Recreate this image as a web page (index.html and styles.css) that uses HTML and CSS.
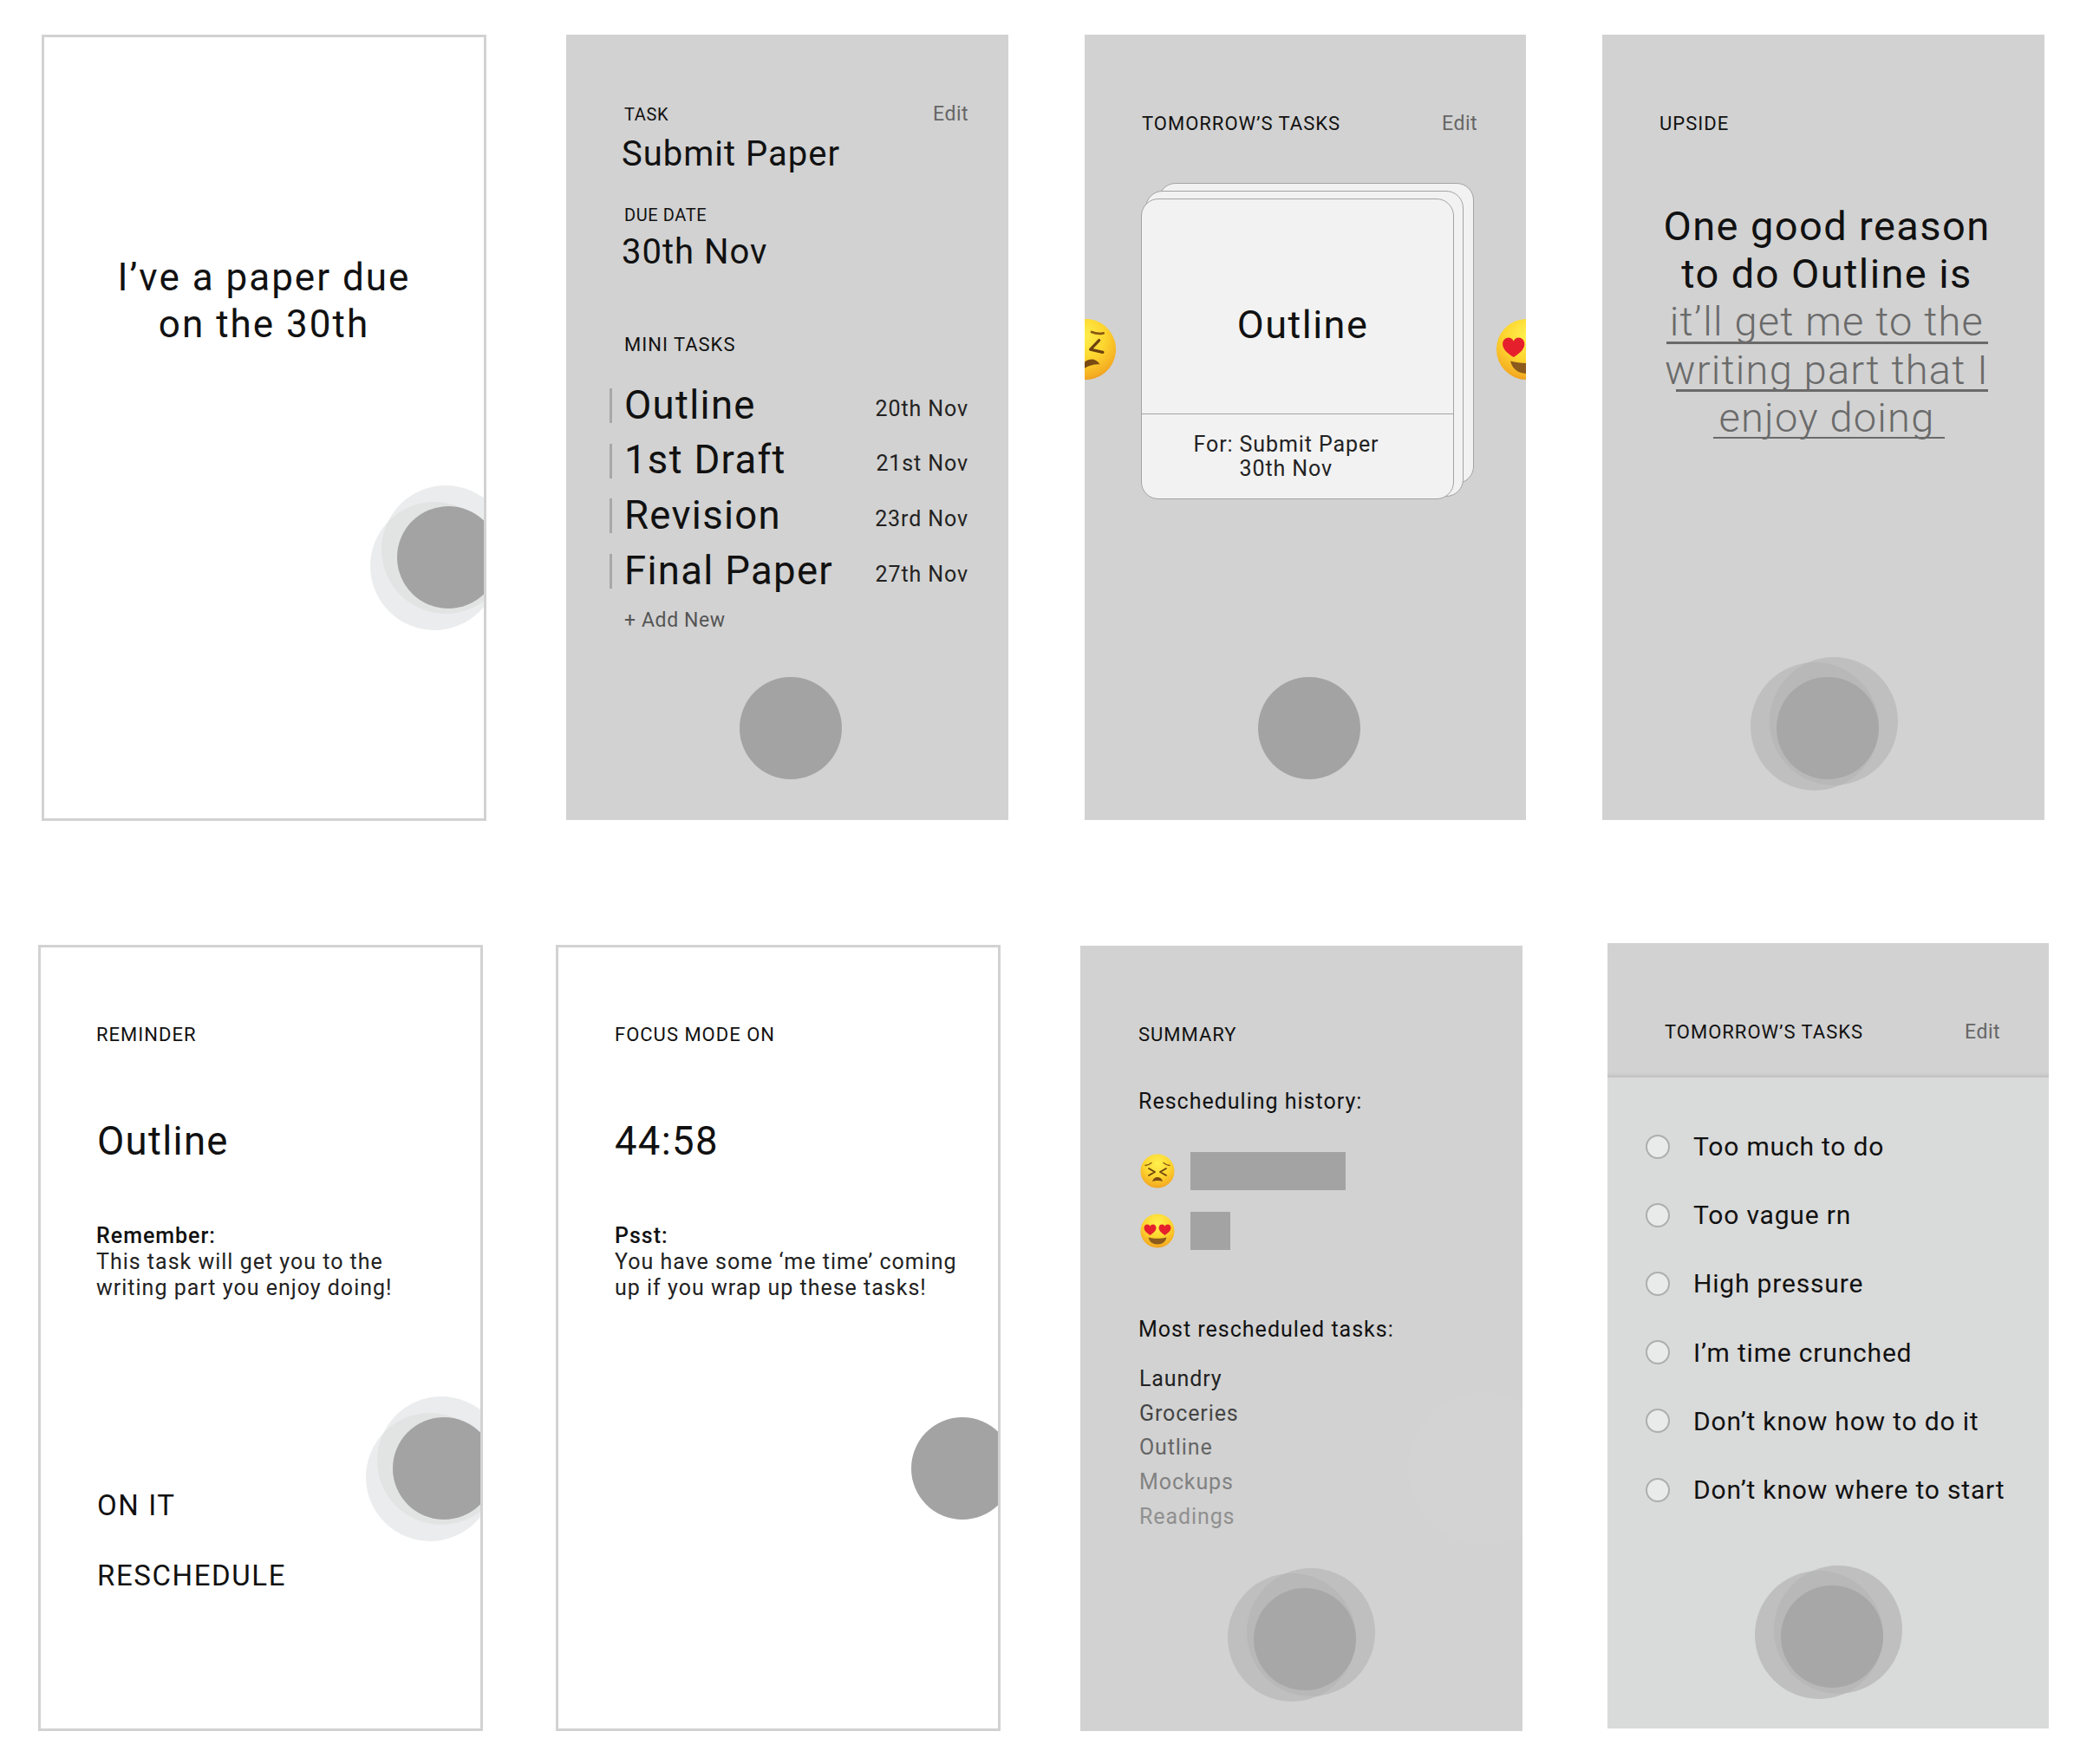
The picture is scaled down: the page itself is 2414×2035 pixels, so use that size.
FILE: index.html
```html
<!DOCTYPE html>
<html lang="en">
<head>
<meta charset="utf-8">
<title>Task app screens</title>
<link rel="stylesheet" href="styles.css">
</head>
<body>
<svg class="defs" width="0" height="0" aria-hidden="true">
  <defs>
    <radialGradient id="face" cx="50%" cy="28%" r="78%">
      <stop offset="0" stop-color="#fff14f"/>
      <stop offset="0.5" stop-color="#fdd52f"/>
      <stop offset="0.85" stop-color="#f5ae22"/>
      <stop offset="1" stop-color="#e98f1a"/>
    </radialGradient>
    <symbol id="sad" viewBox="0 0 40 40">
      <circle cx="20" cy="20" r="19.5" fill="url(#face)"/>
      <path d="M6 13.500c2.500-.3 5-1.300 7-3M34 13.500c-2.500-.3-5-1.300-7-3" stroke="#8a5a14" stroke-width="1.500" fill="none" stroke-linecap="round"/>
      <path d="M10 17l7 4-7 4M30 17l-7 4 7 4" stroke="#6b4110" stroke-width="1.800" fill="none" stroke-linecap="round" stroke-linejoin="round"/>
      <path d="M14 32c1-3.500 3.200-5 6-5s5 1.500 6 5c-3.500-1.500-8.500-1.500-12 0z" fill="#7a4a12"/>
    </symbol>
    <symbol id="love" viewBox="0 0 40 40">
      <circle cx="20" cy="20" r="19.500" fill="url(#face)"/>
      <path d="M11.500 25c-4.500-2.800-7-5.500-7-8.400 0-2.500 1.800-4.100 3.700-4.100 1.400 0 2.700.8 3.300 2.300.6-1.500 1.900-2.300 3.300-2.300 1.900 0 3.700 1.600 3.700 4.100 0 2.900-2.500 5.600-7 8.400z" fill="#e5202c"/>
      <path d="M28.500 25c-4.500-2.800-7-5.500-7-8.400 0-2.500 1.800-4.100 3.700-4.100 1.400 0 2.700.8 3.300 2.300.6-1.500 1.900-2.300 3.300-2.300 1.900 0 3.700 1.600 3.700 4.100 0 2.900-2.500 5.600-7 8.400z" fill="#e5202c"/>
      <path d="M9.500 27.500c6.500 1.800 14.500 1.800 21 0-1 5-5 8-10.500 8s-9.500-3-10.500-8z" fill="#8b5a1c"/>
    </symbol>
  </defs>
</svg>

<main class="board">
  <section class="row row-top">
    <article class="screen screen-light p1">
      <h1 class="statement">I’ve a paper due<br>on the 30th</h1>
      <div class="touch touch-light t1"><i class="halo halo-a"></i><i class="halo halo-b"></i><i class="dot"></i></div>
    </article>

    <article class="screen screen-gray p2">
      <div class="header-row task-head"><span class="label label-sm">TASK</span><span class="edit">Edit</span></div>
      <div class="title-md">Submit Paper</div>
      <div class="label label-sm due-label">DUE DATE</div>
      <div class="title-md">30th Nov</div>
      <div class="label mini-label">MINI TASKS</div>
      <ul class="mini-list">
        <li class="mini"><span class="mini-name">Outline</span><span class="mini-date">20th Nov</span></li>
        <li class="mini"><span class="mini-name">1st Draft</span><span class="mini-date">21st Nov</span></li>
        <li class="mini"><span class="mini-name">Revision</span><span class="mini-date">23rd Nov</span></li>
        <li class="mini"><span class="mini-name">Final Paper</span><span class="mini-date">27th Nov</span></li>
      </ul>
      <div class="add-new">+ Add New</div>
      <div class="touch t2"><i class="dot"></i></div>
    </article>

    <article class="screen screen-gray p3">
      <div class="header-row page-head"><span class="label">TOMORROW’S TASKS</span><span class="edit">Edit</span></div>
      <svg class="side-emoji side-left" aria-hidden="true"><use href="#sad"/></svg>
      <svg class="side-emoji side-right" aria-hidden="true"><use href="#love"/></svg>
      <div class="card-stack">
        <div class="card card-back"></div>
        <div class="card card-mid"></div>
        <div class="card card-front">
          <div class="card-title">Outline</div>
          <div class="card-foot"><span>For: Submit Paper<br><span class="card-date">30th Nov</span></span></div>
        </div>
      </div>
      <div class="touch t3"><i class="dot"></i></div>
    </article>

    <article class="screen screen-gray p4">
      <div class="header-row page-head"><span class="label">UPSIDE</span></div>
      <div class="reason">
        <p class="reason-lead">One good reason<br>to do Outline is</p>
        <p class="upline ul1">it’ll get me to the</p>
        <p class="upline ul2">writing part that I</p>
        <p class="upline ul3">enjoy doing</p>
      </div>
      <div class="touch touch-gray t4"><i class="halo halo-a"></i><i class="halo halo-b"></i><i class="dot"></i></div>
    </article>
  </section>

  <section class="row row-bottom">
    <article class="screen screen-light p5">
      <div class="header-row page-head"><span class="label">REMINDER</span></div>
      <div class="big-line">Outline</div>
      <p class="note"><b>Remember:</b><br>This task will get you to the<br>writing part you enjoy doing!</p>
      <div class="action action-first">ON IT</div>
      <div class="action action-second">RESCHEDULE</div>
      <div class="touch touch-light t5"><i class="halo halo-a"></i><i class="halo halo-b"></i><i class="dot"></i></div>
    </article>

    <article class="screen screen-light p6">
      <div class="header-row page-head"><span class="label">FOCUS MODE ON</span></div>
      <div class="big-line">44:58</div>
      <p class="note"><b>Psst:</b><br>You have some ‘me time’ coming<br>up if you wrap up these tasks!</p>
      <div class="touch t6"><i class="dot"></i></div>
    </article>

    <article class="screen screen-gray p7">
      <div class="header-row page-head"><span class="label">SUMMARY</span></div>
      <div class="sum-title history">Rescheduling history:</div>
      <div class="bar-row bar-row-first"><svg class="bar-emoji" aria-hidden="true"><use href="#sad"/></svg><span class="bar bar-long"></span></div>
      <div class="bar-row bar-row-second"><svg class="bar-emoji" aria-hidden="true"><use href="#love"/></svg><span class="bar bar-short"></span></div>
      <div class="sum-title most">Most rescheduled tasks:</div>
      <ul class="rank-list">
        <li class="rank r1">Laundry</li>
        <li class="rank r2">Groceries</li>
        <li class="rank r3">Outline</li>
        <li class="rank r4">Mockups</li>
        <li class="rank r5">Readings</li>
      </ul>
      <i class="ghost"></i>
      <div class="touch touch-gray t7"><i class="halo halo-a"></i><i class="halo halo-b"></i><i class="dot"></i></div>
    </article>

    <article class="screen p8">
      <header class="p8-head"><div class="header-row"><span class="label">TOMORROW’S TASKS</span><span class="edit">Edit</span></div></header>
      <ul class="reasons">
        <li class="option"><i class="radio"></i>Too much to do</li>
        <li class="option"><i class="radio"></i>Too vague rn</li>
        <li class="option"><i class="radio"></i>High pressure</li>
        <li class="option"><i class="radio"></i>I’m time crunched</li>
        <li class="option"><i class="radio"></i>Don’t know how to do it</li>
        <li class="option"><i class="radio"></i>Don’t know where to start</li>
      </ul>
      <div class="touch touch-gray t8"><i class="halo halo-a"></i><i class="halo halo-b"></i><i class="dot"></i></div>
    </article>
  </section>
</main>
</body>
</html>
```
FILE: styles.css
```css
* { box-sizing: border-box; }
html, body { margin: 0; padding: 0; background: #fff; }
body { font-family: Roboto, "Liberation Sans", sans-serif; color: #111; width: 2414px; height: 2035px; overflow: hidden; }
.defs { position: absolute; }
h1, p, ul { margin: 0; padding: 0; font-weight: 400; }
ul { list-style: none; }
i { display: block; }

.row { display: flex; align-items: flex-start; }
.row-top { padding: 40px 0 0 48px; height: 1088px; }
.row-bottom { padding-left: 44px; }

.screen { position: relative; overflow: hidden; flex: none; width: 510px; height: 906px; }
.screen-light { background: #fff; border: 3px solid #d2d2d2; width: 513px; height: 907px; }
.screen-gray { background: #d2d2d2; }

.p2 { margin-left: 92px; padding: 0 46px 0 64px; }
.p3 { margin-left: 88px; padding: 0 56px 0 66px; width: 509px; }
.p4 { margin-left: 88px; padding: 0 0 0 66px; }
.p5 { margin-top: 2px; padding-left: 64px; }
.p6 { margin-left: 84px; margin-top: 2px; padding-left: 65px; }
.p7 { margin-left: 92px; margin-top: 3px; padding-left: 67px; }
.p8 { margin-left: 98px; width: 509px; background: #d9dada; }

.header-row { display: flex; justify-content: space-between; align-items: center; height: 30px; }
.label { font-size: 22px; letter-spacing: 1px; color: #111; line-height: 30px; }
.label-sm { font-size: 20px; letter-spacing: .6px; }
.edit { font-size: 23px; letter-spacing: .5px; color: #666; line-height: 30px; }

.page-head { margin-top: 88px; }
.screen-light .page-head { margin-top: 86px; }

/* P1 */
.statement { font-size: 44px; line-height: 54px; letter-spacing: 2px; text-align: center; padding-top: 250px; color: #111; }

/* P2 */
.task-head { margin-top: 77px; padding-left: 3px; }
.title-md { font-size: 40px; line-height: 50px; letter-spacing: 1px; color: #111; margin-top: 6px; }
.due-label { margin: 30px 0 0 3px; }
.p2 .title-md:nth-of-type(4) { margin-top: 3px; }
.mini-label { margin: 67px 0 0 3px; }
.mini-list { margin-top: 23px; }
.mini { position: relative; display: flex; justify-content: space-between; align-items: center; height: 63.6px; padding-left: 3px; }
.mini::before { content: ""; position: absolute; left: -14px; top: 12px; width: 3px; height: 40px; background: #a8a8a8; }
.mini-name { font-size: 45.5px; letter-spacing: 1.3px; color: #111; line-height: 60px; }
.mini-date { font-size: 25px; letter-spacing: .9px; color: #222; line-height: 30px; position: relative; top: 4px; }
.add-new { margin: 11px 0 0 3px; font-size: 23px; letter-spacing: .6px; color: #555; line-height: 30px; }

/* P3 */
.card-stack { position: absolute; left: 65px; top: 171px; width: 384px; height: 365px; }
.card { position: absolute; background: #f2f2f2; border: 1.5px solid #a3a3a3; border-radius: 20px; }
.card-back { left: 20px; top: 0; width: 364px; height: 347px; }
.card-mid { left: 5px; top: 9px; width: 367px; height: 353px; }
.card-front { left: 0; top: 18px; width: 361px; height: 347px; display: flex; flex-direction: column; }
.card-title { flex: none; height: 248px; display: flex; align-items: center; justify-content: center; padding: 42px 0 0 12px; font-size: 45px; letter-spacing: 1.5px; color: #111; border-bottom: 1.5px solid #a3a3a3; }
.card-foot { flex: 1; display: flex; justify-content: center; padding: 21px 26px 0 0; font-size: 25px; line-height: 28px; letter-spacing: .9px; color: #222; }
.card-date { padding-left: 53px; }
.side-emoji { position: absolute; top: 327px; width: 72px; height: 72px; }
.side-left { left: -35px; transform: rotate(-17deg); }
.side-right { left: 474px; }

/* P4 */
.reason { position: absolute; left: 0; right: 0; top: 193px; padding-left: 8px; text-align: center; font-size: 47px; line-height: 55.2px; letter-spacing: 1.4px; color: #111; }
.upline { position: static; font-weight: 300; color: #6a6a6a; letter-spacing: 1.2px; height: 55.2px; }
.upline::after { content: ""; display: block; height: 3px; background: #6a6a6a; margin-top: -5px; }
.ul1::after { margin-left: 66px; margin-right: 65px; }
.ul2::after { margin-left: 77px; margin-right: 65px; }
.ul3::after { height: 2px; margin-left: 120px; margin-right: 115px; }

/* P5 / P6 */
.big-line { font-size: 45.5px; line-height: 60px; letter-spacing: 1.3px; color: #111; margin: 78px 0 0 1px; }
.p6 .big-line { margin-left: 0; }
.note { margin-top: 64px; font-size: 25px; line-height: 30px; letter-spacing: 1px; color: #222; }
.note b { font-weight: 500; color: #111; }
.action { font-size: 33px; line-height: 40px; letter-spacing: 1.6px; color: #111; margin-left: 1px; }
.action-first { margin-top: 216px; }
.action-second { margin-top: 41px; }

/* P7 */
.sum-title { font-size: 25px; line-height: 30px; letter-spacing: 1px; color: #111; }
.history { margin-top: 47px; }
.bar-row { display: flex; align-items: center; gap: 18px; height: 44px; }
.bar-row-first { margin-top: 43px; }
.bar-row-second { margin-top: 25px; }
.bar-emoji { width: 40px; height: 40px; margin-left: 2px; flex: none; }
.bar { display: block; height: 44px; background: #a3a3a3; }
.bar-long { width: 179px; }
.bar-short { width: 46px; }
.most { margin-top: 77px; }
.rank-list { margin-top: 22px; }
.rank { font-size: 25px; line-height: 39.7px; letter-spacing: .9px; margin-left: 1px; }
.r1 { color: #222; }
.r2 { color: #444; }
.r3 { color: #666; }
.r4 { color: #828282; }
.r5 { color: #909090; }
.ghost { position: absolute; left: 378px; top: 515px; width: 176px; height: 176px; border-radius: 50%; background: #d3d3d3; }

/* P8 */
.p8-head { height: 155px; padding: 88px 56px 0 66px; background: #d2d2d2; box-shadow: inset 0 -6px 5px -4px rgba(0,0,0,.1); position: relative; }
.reasons { padding: 0 0 0 44px; margin-top: 40px; }
.option { display: flex; align-items: center; gap: 27px; height: 79.2px; font-size: 30px; letter-spacing: .82px; color: #111; }
.radio { width: 28px; height: 28px; border-radius: 50%; background: #e9eaea; border: 2px solid #aeaeae; flex: none; }

/* Touch indicator: halo-b carries a copy of halo-a inside it to tint the overlap */
.touch { position: absolute; width: 118px; height: 118px; }
.dot { position: absolute; inset: 0; border-radius: 50%; background: #a3a3a3; }
.halo { position: absolute; width: 148px; height: 148px; border-radius: 50%; }
.halo-b { overflow: hidden; }
.halo-b::before { content: ""; position: absolute; width: 148px; height: 148px; border-radius: 50%; }
.touch-light .halo { background: #ebeced; }
.touch-light .halo-a { left: -31px; top: -5px; }
.touch-light .halo-b { left: -18px; top: -24px; }
.touch-light .halo-b::before { left: -13px; top: 19px; background: #e2e3e3; }
.touch-gray .halo { background: #bfbfbf; }
.touch-gray .halo-a { left: -30px; top: -17px; }
.touch-gray .halo-b { left: -8px; top: -23px; }
.touch-gray .halo-b::before { left: -22px; top: 6px; background: #b8b8b8; }
.touch-gray .dot { background: #a7a7a7; }
.t1 { left: 407px; top: 541px; }
.t2 { left: 200px; top: 741px; }
.t3 { left: 200px; top: 741px; }
.t4 { left: 201px; top: 741px; }
.t5 { left: 406px; top: 542px; }
.t6 { left: 407px; top: 542px; }
.t7 { left: 200px; top: 741px; }
.t8 { left: 199.5px; top: 741px; }
```
